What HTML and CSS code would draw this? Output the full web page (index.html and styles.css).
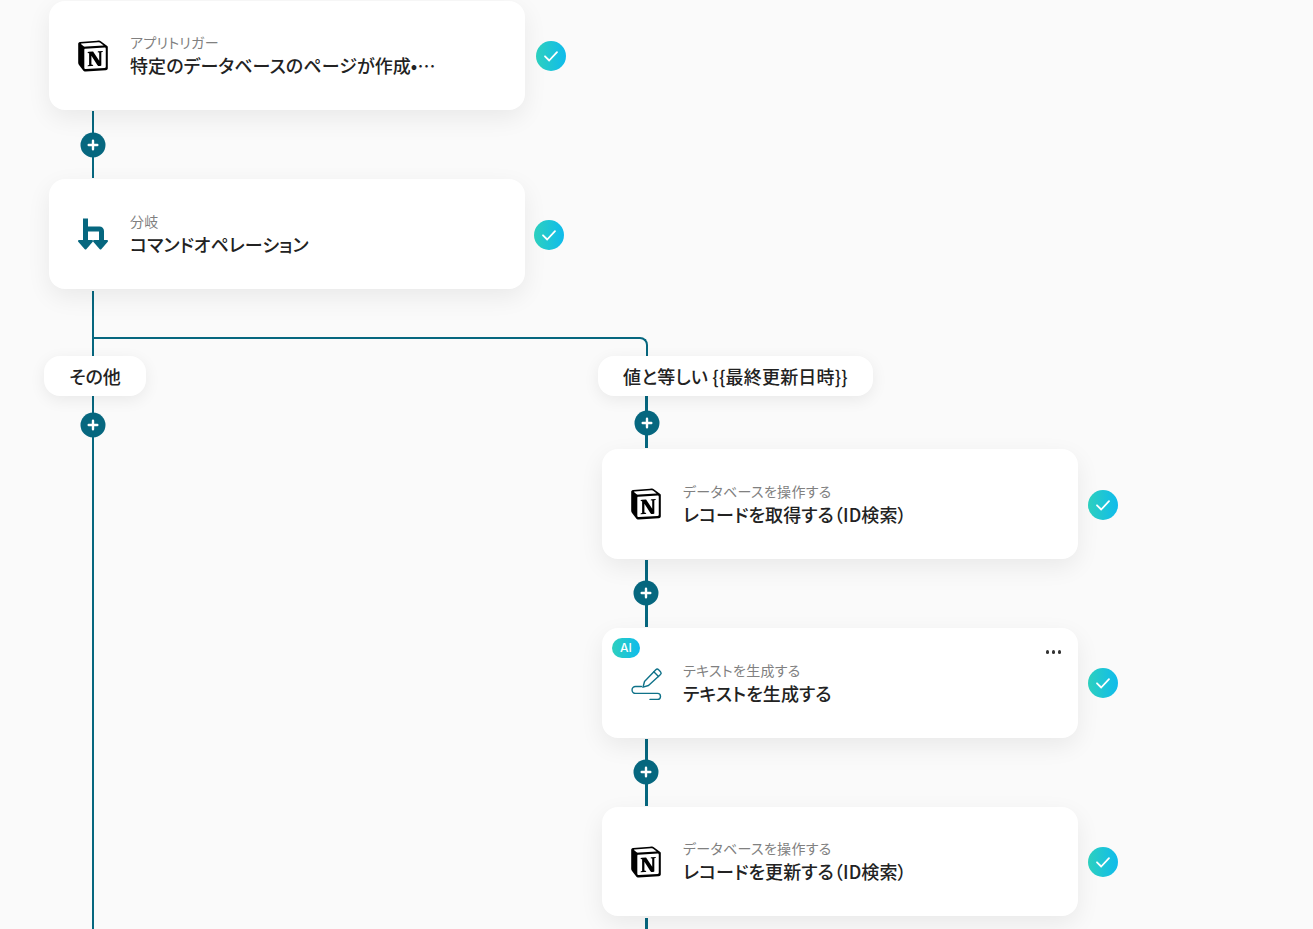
FILE: index.html
```html
<!DOCTYPE html>
<html lang="ja">
<head>
<meta charset="utf-8">
<title>Flow</title>
<link rel="stylesheet" href="styles.css">
</head>
<body>
<svg width="0" height="0" class="defs">
  <defs>
    <symbol id="notion" viewBox="-2 -2 28 28">
      <path d="M4.459 4.208c.746.606 1.026.56 2.428.466l13.215-.793c.28 0 .047-.28-.046-.326L17.86 1.968c-.42-.326-.981-.7-2.055-.607L3.01 2.295c-.466.046-.56.28-.374.466zm.793 3.08v13.904c0 .747.373 1.027 1.214.98l14.523-.84c.841-.046.935-.56.935-1.167V6.354c0-.606-.233-.933-.748-.887l-15.177.887c-.56.047-.747.327-.747.933zm14.337.745c.093.42 0 .84-.42.888l-.7.14v10.264c-.608.327-1.168.514-1.635.514-.748 0-.935-.234-1.495-.933l-4.577-7.186v6.952L12.21 19s0 .84-1.168.84l-3.222.186c-.093-.186 0-.653.327-.746l.84-.233V9.854L7.822 9.76c-.094-.42.14-1.026.793-1.073l3.456-.233 4.764 7.279v-6.44l-1.215-.14c-.093-.514.28-.887.747-.933zM1.936 1.035l13.31-.98c1.634-.14 2.055-.047 3.082.7l4.249 2.986c.7.513.934.653.934 1.213v16.378c0 1.026-.373 1.634-1.68 1.726l-15.458.934c-.98.047-1.448-.093-1.962-.747l-3.129-4.06c-.56-.747-.793-1.306-.793-1.96V2.667c0-.839.374-1.54 1.447-1.632z" fill="#000"/>
    </symbol>
    <symbol id="check" viewBox="0 0 30 30">
      <path d="M9 15.300 13.200 19.500 21 11.200" fill="none" stroke="#fff" stroke-width="1.800" stroke-linecap="round" stroke-linejoin="round"/>
    </symbol>
    <symbol id="plus" viewBox="0 0 26 26">
      <circle cx="13" cy="13" r="12.500" fill="#06677f"/>
      <path d="M13 8.700v8.600M8.700 13h8.600" stroke="#fff" stroke-width="2.400" stroke-linecap="round"/>
    </symbol>
  </defs>
</svg>

<main class="canvas">
  <div class="line v l-a"></div>
  <div class="line v l-b"></div>
  <div class="line t l-c"></div>
  <div class="branch"></div>
  <div class="line t l-d"></div>
  <div class="line t l-e"></div>
  <div class="line t l-f"></div>

  <svg class="plus p1"><use href="#plus"/></svg>
  <svg class="plus p2"><use href="#plus"/></svg>
  <svg class="plus p3"><use href="#plus"/></svg>
  <svg class="plus p4"><use href="#plus"/></svg>
  <svg class="plus p5"><use href="#plus"/></svg>

  <article class="card c1">
    <svg class="icon"><use href="#notion"/></svg>
    <div class="text"><p class="label">アプリトリガー</p><p class="title">特定のデータベースのページが作成•…</p></div>
  </article>
  <svg class="ok k1"><use href="#check"/></svg>

  <article class="card c2">
    <svg class="icon" viewBox="0 0 36 36">
      <path d="M10.500 2.500V25M10.500 13H24.500a2 2 0 0 1 2 2V25" fill="none" stroke="#06677f" stroke-width="5"/>
      <path d="M4 25H17L10.500 32.500ZM19 25H32L25.500 32.500Z" fill="#06677f" stroke="#06677f" stroke-width="2" stroke-linejoin="round"/>
    </svg>
    <div class="text"><p class="label">分岐</p><p class="title">コマンドオペレーション</p></div>
  </article>
  <svg class="ok k2"><use href="#check"/></svg>

  <div class="pill pill-a">その他</div>
  <div class="pill pill-b">値と等しい {{最終更新日時}}</div>

  <article class="card c3">
    <svg class="icon"><use href="#notion"/></svg>
    <div class="text"><p class="label">データベースを操作する</p><p class="title">レコードを取得する（ID検索）</p></div>
  </article>
  <svg class="ok k3"><use href="#check"/></svg>

  <article class="card c4">
    <span class="ai">AI</span>
    <span class="more"><i></i><i></i><i></i></span>
    <svg class="icon" viewBox="0 0 36 36">
      <g fill="none" stroke="#0f7289" stroke-width="1.400" stroke-linecap="round" stroke-linejoin="round">
        <path d="M16.500 16.500 27.800 4.800a2 2 0 0 1 2.800 0L32.500 6.700a2 2 0 0 1 0 2.800L20.500 20.500 15 22.200Z"/>
        <path d="M25.800 6.800 30.500 11.500"/>
        <path d="M13.500 21.500H7.500a3.200 3.200 0 0 0 0 6.900H29.500a3 3 0 0 1 0 6H22"/>
      </g>
    </svg>
    <div class="text"><p class="label">テキストを生成する</p><p class="title">テキストを生成する</p></div>
  </article>
  <svg class="ok k4"><use href="#check"/></svg>

  <article class="card c5">
    <svg class="icon"><use href="#notion"/></svg>
    <div class="text"><p class="label">データベースを操作する</p><p class="title">レコードを更新する（ID検索）</p></div>
  </article>
  <svg class="ok k5"><use href="#check"/></svg>
</main>
</body>
</html>
```
FILE: styles.css
```css
* { box-sizing: border-box; }
html, body { margin: 0; height: 100%; }
body {
  background: #fafafa;
  overflow: hidden;
  font-family: "Noto Sans CJK JP", "Noto Sans", sans-serif;
  font-feature-settings: "palt";
  color: #222;
}
.defs { position: absolute; }
.canvas { position: relative; width: 1313px; height: 929px; overflow: hidden; }

.card {
  position: absolute;
  width: 476px;
  height: 110px;
  padding: 0 24px 0 26px;
  display: flex;
  align-items: center;
  gap: 19px;
  background: #fff;
  border-radius: 16px;
  box-shadow: 0 8px 24px rgba(0, 0, 0, .07);
}
.c1 { left: 49px; top: 1px; height: 109px; }
.c2 { left: 49px; top: 179px; }
.c3 { left: 602px; top: 449px; }
.c4 { left: 602px; top: 628px; }
.c5 { left: 602px; top: 807px; height: 109px; }

.icon { width: 36px; height: 36px; flex: none; }
.text { display: flex; flex-direction: column; gap: 0; min-width: 0; margin-top: -1px; }
.label { margin: 0; font-size: 14px; line-height: 20px; letter-spacing: .3px; color: #808080; }
.title { margin: 0; font-size: 18px; line-height: 26px; font-weight: 500; letter-spacing: .1px; color: #222; white-space: nowrap; }

.line { position: absolute; background: #06677f; }
.v { width: 2px; }
.t { width: 3px; }
.l-a { left: 92px; top: 111px; height: 67px; }
.l-b { left: 92px; top: 291px; height: 638px; }
.l-c { left: 645px; top: 396px; height: 52px; }
.l-d { left: 645px; top: 560px; height: 67px; }
.l-e { left: 645px; top: 739px; height: 67px; }
.l-f { left: 645px; top: 918px; height: 11px; }
.branch {
  position: absolute;
  left: 93px;
  top: 337px;
  width: 555px;
  height: 20px;
  border-top: 2px solid #06677f;
  border-right: 2px solid #06677f;
  border-top-right-radius: 8px;
}

.plus { position: absolute; width: 26px; height: 26px; }
.p1 { left: 80px; top: 132px; }
.p2 { left: 80px; top: 412px; }
.p3 { left: 634px; top: 410px; }
.p4 { left: 633px; top: 580px; }
.p5 { left: 633px; top: 759px; }

.ok {
  position: absolute;
  width: 30px;
  height: 30px;
  border-radius: 50%;
  background: linear-gradient(90deg, #2dd0be, #0fbbec);
}
.k1 { left: 536px; top: 41px; }
.k2 { left: 534px; top: 220px; }
.k3 { left: 1088px; top: 490px; }
.k4 { left: 1088px; top: 668px; }
.k5 { left: 1088px; top: 847px; }

.pill {
  position: absolute;
  height: 40px;
  padding-bottom: 1px;
  display: flex;
  align-items: center;
  justify-content: center;
  background: #fff;
  border-radius: 16px;
  box-shadow: 0 4px 16px rgba(0, 0, 0, .07);
  font-size: 18px;
  font-weight: 500;
  white-space: nowrap;
}
.pill-a { left: 44px; top: 356px; width: 102px; }
.pill-b { left: 598px; top: 356px; width: 275px; letter-spacing: .2px; }

.ai {
  position: absolute;
  left: 10px;
  top: 10px;
  width: 28px;
  height: 20px;
  border-radius: 10px;
  background: linear-gradient(90deg, #2dd0be, #0fbbec);
  color: #fff;
  font: 500 12px/20px "Inter", sans-serif;
  text-align: center;
}
.more {
  position: absolute;
  right: 17px;
  top: 22px;
  display: flex;
  gap: 2.500px;
}
.more i { width: 3.500px; height: 3.500px; border-radius: 50%; background: #333; }
```
